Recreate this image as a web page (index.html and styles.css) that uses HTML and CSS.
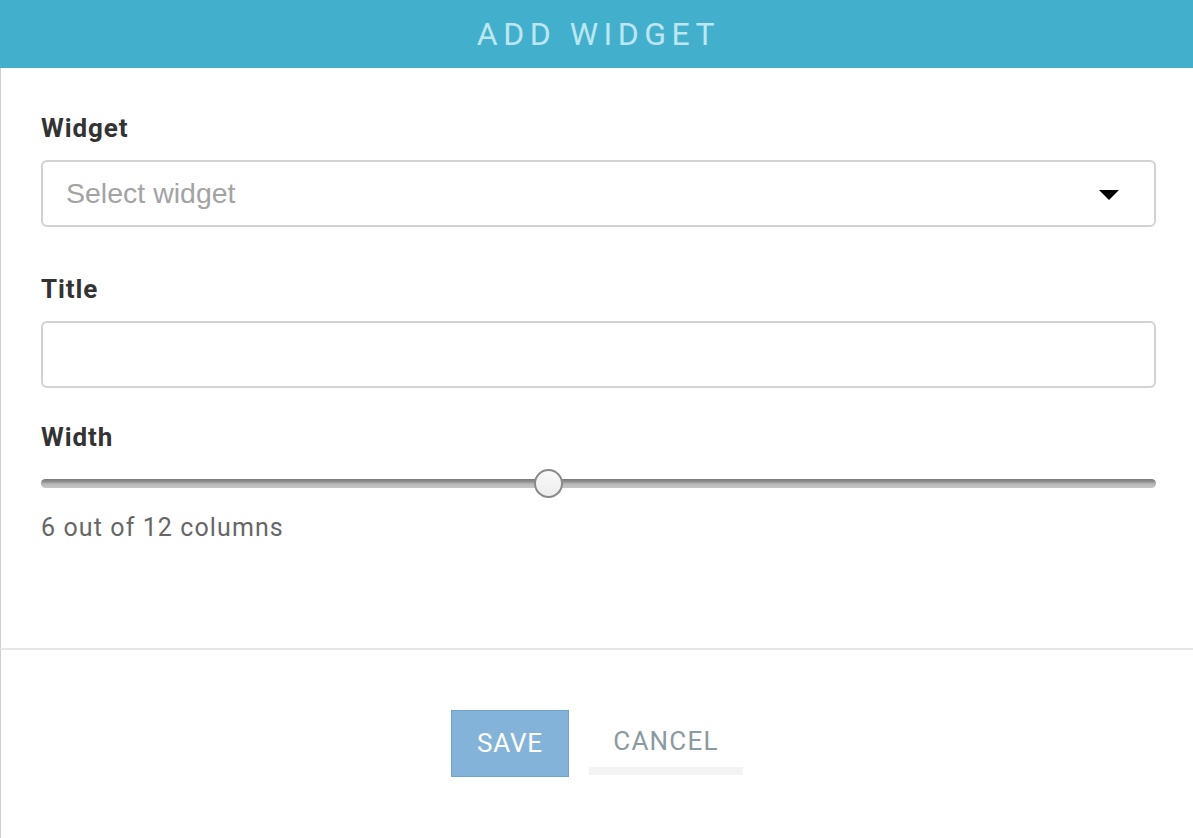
FILE: index.html
```html
<!DOCTYPE html>
<html>
<head>
<meta charset="utf-8">
<link rel="stylesheet" href="styles.css">
</head>
<body>
<div class="dialog">
  <header class="head">ADD WIDGET</header>
  <div class="body">
    <div class="field">
      <label class="label">Widget</label>
      <div class="select">
        <span class="placeholder">Select widget</span>
        <span class="caret"></span>
      </div>
    </div>
    <div class="field">
      <label class="label">Title</label>
      <div class="input"></div>
    </div>
    <div class="field">
      <label class="label">Width</label>
      <div class="slider">
        <div class="track"></div>
        <div class="thumb" style="left: 45.45%"></div>
      </div>
      <div class="hint">6 out of 12 columns</div>
    </div>
  </div>
  <footer class="foot">
    <button class="btn save">SAVE</button>
    <button class="btn cancel">CANCEL</button>
  </footer>
</div>
</body>
</html>
```
FILE: styles.css
```css
html, body {
  margin: 0;
  padding: 0;
  background: #fff;
}
.dialog {
  width: 1193px;
  height: 838px;
  display: flex;
  flex-direction: column;
  font-family: Roboto, "DejaVu Sans", sans-serif;
}
.head {
  height: 68px;
  flex: none;
  background: #42b0cc;
  color: #bde6f0;
  font-size: 32px;
  letter-spacing: 5.5px;
  display: flex;
  align-items: center;
  justify-content: center;
  padding-left: 4px;
}
.body {
  border-left: 1px solid #cfcfcf;
  padding: 44px 37px 0 40px;
  height: 580px;
  flex: none;
  box-sizing: border-box;
}
.field {
  display: flex;
  flex-direction: column;
}
.label {
  font-weight: 700;
  font-size: 26px;
  letter-spacing: 0.9px;
  color: #333;
  line-height: 32px;
  margin-bottom: 16px;
}
.select, .input {
  height: 67px;
  box-sizing: border-box;
  border: 2px solid #d2d2d2;
  border-radius: 6px;
  margin-bottom: 46px;
}
.select {
  display: flex;
  align-items: center;
  justify-content: space-between;
  padding: 0 35px 0 23px;
}
.placeholder {
  font-family: "Liberation Sans", Arial, sans-serif;
  font-size: 28.5px;
  color: #a3a3a3;
}
.caret {
  width: 0;
  height: 0;
  border-left: 10px solid transparent;
  border-right: 10px solid transparent;
  border-top: 10px solid #000;
  margin-top: 2px;
}
.input {
  margin-bottom: 33px;
}
.slider {
  position: relative;
  height: 30px;
  margin-top: -1px;
}
.track {
  position: absolute;
  left: 0;
  right: 0;
  top: 11px;
  height: 9px;
  border-radius: 5px;
  background: linear-gradient(#7a7a7a 0, #8f8f8f 30%, #b8b8b8 55%, #c6c6c6 100%);
}
.thumb {
  position: absolute;
  top: 1px;
  width: 29px;
  height: 29px;
  margin-left: -14px;
  box-sizing: border-box;
  border-radius: 50%;
  border: 2px solid #8a8a8a;
  background: linear-gradient(#fafafa, #ececec);
}
.hint {
  margin-top: 15px;
  font-size: 25px;
  color: #666;
  letter-spacing: 1.1px;
}
.foot {
  border-left: 1px solid #cfcfcf;
  border-top: 2px solid #e6e6e6;
  flex: 1;
  display: flex;
  justify-content: center;
  align-items: flex-start;
  padding-top: 60px;
  gap: 20px;
}
.btn {
  font-family: Roboto, "DejaVu Sans", sans-serif;
  font-size: 26px;
  height: 67px;
  box-sizing: border-box;
  cursor: pointer;
  letter-spacing: 0.8px;
}
.save {
  width: 118px;
  background: #84b3da;
  border: 1px solid #70a4d0;
  color: #fff;
  padding-bottom: 3px;
}
.cancel {
  width: 154px;
  height: 65px;
  background: #fff;
  border: none;
  border-bottom: 8px solid #f3f3f3;
  color: #8a9a9f;
  padding-top: 6px;
  letter-spacing: 1.2px;
}
```
